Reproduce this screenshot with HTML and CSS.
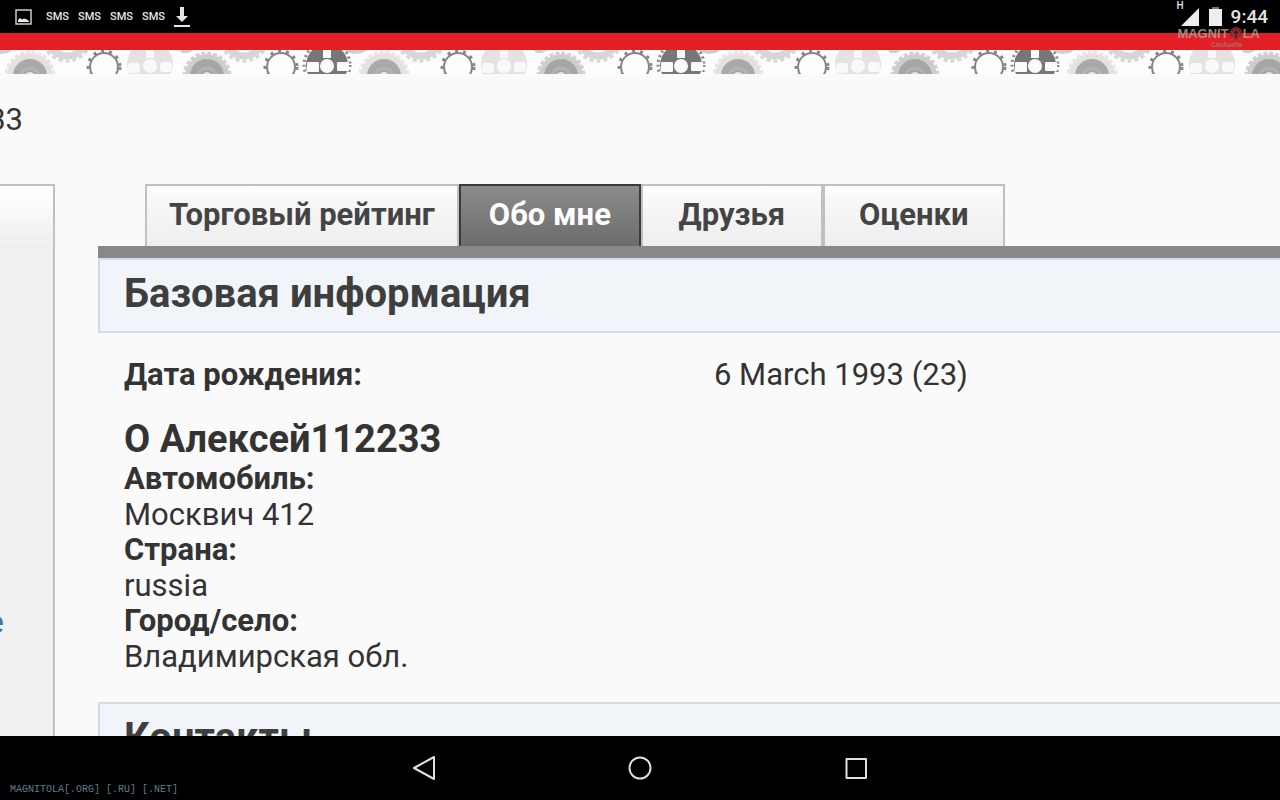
FILE: index.html
```html
<!DOCTYPE html>
<html lang="ru">

	<head>
		<meta charset="UTF-8">
		<title>Алексей112233</title>
		<link rel="stylesheet" href="styles.css">
	</head>
	<body>
		<div class="status">
			<svg class="pic" width="18" height="16" viewBox="0 0 18 16">
				<rect x="1" y="1" width="15" height="14" fill="none" stroke="#ccc" stroke-width="1.5" />
				<path d="M3 13V11L5 9L7 10.500L9 9.500L11 10L14 12V13Z" fill="#e8e8e8" />
			</svg>
			<span class="sms">SMS</span>
			<span class="sms">SMS</span>
			<span class="sms">SMS</span>
			<span class="sms">SMS</span>
			<svg class="load" width="16" height="20" viewBox="0 0 16 20">
				<path d="M6 0H10V9H14L8 15L2 9H6ZM0 18H16V20H0Z" fill="#e4e4e4" />
			</svg>
			<div class="right">
				<span class="net">H</span>
				<svg width="18" height="18" viewBox="0 0 18 18">
					<path d="M0 18L18 0V18Z" fill="#eee" />
				</svg>
				<svg class="bat" width="13" height="19" viewBox="0 0 13 19">
					<path d="M3 0H10V2H3Z" fill="#777" />
					<path d="M0 2H13V19H0Z" fill="#eee" />
				</svg>
				<span class="time">9:44</span>
			</div>
		</div>
		<div class="logo">
			<div class="name">
				MAGNIT<svg width="14" height="15" viewBox="0 0 15 15">
					<circle cx="7.500" cy="7.500" r="6" fill="#5b1a1c" stroke="#a8272b" stroke-width="2" />
					<path d="M3 15L5.500 10A3.500 3.500 0 1 1 9.500 10L12 15" fill="none" stroke="#9b4a48" stroke-width="1.500" />
				</svg>LA
			</div>
			<div class="sub">CarAudio</div>
		</div>
		<div class="page">
			<div class="red"></div>
			<svg class="gears" width="100%" height="24">
				<defs>
					<pattern id="gears" width="354" height="24" patternUnits="userSpaceOnUse">
						<rect width="354" height="24" fill="#fdfdfd" />
						<!-- колёса, уходящие за верхний край -->
						<g fill="none" stroke="#d6d6d6">
							<circle cx="67" cy="-13" r="19" stroke-width="7" />
							<circle cx="67" cy="-13" r="24" stroke-width="3" stroke-dasharray="4 3" />
							<circle cx="244" cy="-13" r="19" stroke-width="7" />
							<circle cx="244" cy="-13" r="24" stroke-width="3" stroke-dasharray="4 3" />
						</g>
						<path d="M0 0H12L8 3L0 4ZM180 0H194L188 3H182ZM354 0H346V2L354 4Z" fill="#cfcfcf" />
						<!-- большие колёса -->
						<circle cx="30" cy="26" r="23" fill="#e5e1df" />
						<circle cx="30" cy="26" r="24" fill="none" stroke="#ebe6e3" stroke-width="3" stroke-dasharray="4 2" />
						<circle cx="30" cy="26" r="17" fill="#a9a9a9" />
						<circle cx="30" cy="27" r="9" fill="none" stroke="#b4b4b4" stroke-width="3" />
						<circle cx="30" cy="27" r="5" fill="#e6e6e6" />
						<circle cx="207" cy="26" r="22" fill="#cdcdcd" />
						<circle cx="207" cy="26" r="23" fill="none" stroke="#d0d0d0" stroke-width="3" stroke-dasharray="4 2" />
						<circle cx="207" cy="26" r="17" fill="#a6a6a6" />
						<circle cx="207" cy="27" r="9" fill="none" stroke="#b2b2b2" stroke-width="3" />
						<circle cx="207" cy="27" r="5" fill="#e0e0e0" />
						<!-- маленькие шестерёнки -->
						<g fill="#fdfdfd" stroke="#868686">
							<circle cx="104" cy="17" r="14" stroke-width="2" />
							<circle cx="104" cy="17" r="16" fill="none" stroke-width="3" stroke-dasharray="3 5" />
							<circle cx="281" cy="17" r="14" stroke-width="2" />
							<circle cx="281" cy="17" r="16" fill="none" stroke-width="3" stroke-dasharray="3 5" />
						</g>
						<!-- колесо с окнами, светлое и тёмное -->
						<circle cx="150" cy="14" r="23" fill="#e4e3e2" />
						<g fill="#f9f9f9">
							<path d="M146 0H154V8H146Z" />
							<rect x="128" y="13" width="12" height="10" rx="3" />
							<circle cx="150" cy="16" r="7" />
							<rect x="160" y="12" width="12" height="10" rx="3" />
						</g>
						<circle cx="327" cy="15" r="21" fill="#777" />
						<circle cx="327" cy="15" r="23" fill="none" stroke="#888" stroke-width="3" stroke-dasharray="2 3" />
						<g fill="#fbfbfb">
							<path d="M323 0H331V8H323Z" />
							<rect x="307" y="12" width="12" height="10" rx="1" />
							<circle cx="327" cy="16" r="7" />
							<rect x="337" y="12" width="12" height="9" rx="1" />
						</g>
					</pattern>
				</defs>
				<rect width="100%" height="24" fill="url(#gears)" />
			</svg>
			<h1 class="user"><span>33</span></h1>
			<div class="cols">
				<div class="side">
					<div class="sideTop"></div>
					<a class="more" href="#">е</a>
				</div>
				<div class="con">
					<div class="tabs">
						<a href="#">Торговый рейтинг</a>
						<a href="#" class="activ">Обо мне</a>
						<a href="#">Друзья</a>
						<a href="#">Оценки</a>
					</div>
					<div class="line"></div>
					<h2>Базовая информация</h2>
					<div class="info">
						<dl class="birth">
							<dt>Дата рождения:</dt>
							<dd>6 March 1993 (23)</dd>
						</dl>
						<h3>О Алексей112233</h3>
						<dl>
							<dt>Автомобиль:</dt>
							<dd>Москвич 412</dd>
							<dt>Страна:</dt>
							<dd>russia</dd>
							<dt>Город/село:</dt>
							<dd>Владимирская обл.</dd>
						</dl>
					</div>
					<h2>Контакты</h2>
				</div>
			</div>
		</div>
		<div class="nav">
			<button aria-label="Назад">
				<svg width="26" height="28" viewBox="0 0 26 28">
					<path d="M3 14L23 3V25Z" />
				</svg>
			</button>
			<button aria-label="Домой">
				<svg width="26" height="28" viewBox="0 0 26 28">
					<circle cx="13" cy="14" r="10.500" />
				</svg>
			</button>
			<button aria-label="Недавние">
				<svg width="26" height="28" viewBox="0 0 26 28">
					<path d="M3.500 5H23V24H3.500Z" />
				</svg>
			</button>
			<span class="mark">MAGNITOLA[.ORG] [.RU] [.NET]</span>
		</div>
	</body>
</html>
```

FILE: styles.css
```css
body,
h1,
h2,
h3,
dl,
dt,
dd {
	margin: 0;
	padding: 0;
}

body {
	display: flex;
	flex-direction: column;
	height: 100vh;
	overflow: hidden;
	position: relative;
	background: #fafafa;
	color: #333;
	font: 31px/35px Roboto, sans-serif;
}

svg {
	display: block;
	flex: none;
}

a {
	text-decoration: none;
}

.status {
	display: flex;
	align-items: center;
	flex: none;
	gap: 10px;
	height: 33px;
	padding: 0 12px 0 15px;
	background: #000;
	color: #e4e4e4;
}

.pic {
	margin-right: 3px;
}

.sms {
	width: 22px;
	font: 500 11px/16px Roboto, sans-serif;
}

.status .right {
	display: flex;
	align-items: center;
	margin-left: auto;
}

.net {
	align-self: flex-start;
	margin-right: -3px;
	font: 500 10px/12px Roboto, sans-serif;
}

.bat {
	margin: 0 9px 0 10px;
}

.time {
	font: 500 19px/33px Roboto, sans-serif;
}

/* логотип поверх шапки */
.logo {
	position: absolute;
	top: 26px;
	right: 20px;
	color: #b5a196;
	opacity: .8;
	text-align: center;
}

.name {
	display: flex;
	align-items: center;
	font: bold 13px/15px "Liberation Sans Narrow", "Liberation Sans", sans-serif;
}

.sub {
	padding-left: 16px;
	color: #a08080;
	font: bold 7px/8px "Liberation Sans", sans-serif;
}

.page {
	flex: 1;
	min-height: 0;
	overflow: hidden;
}

.red {
	height: 17px;
	background: #e41e25;
}

.user {
	display: flex;
	justify-content: flex-end;
	width: 23px;
	padding: 28px 0 47px;
	font-size: 31px;
	font-weight: normal;
}

.cols {
	display: flex;
	gap: 43px;
	min-height: 100%;
}

.side {
	display: flex;
	flex-direction: column;
	flex: none;
	width: 53px;
	border-top: 2px solid #c0c0c0;
	border-right: 2px solid #c0c0c0;
	background: #f0f0f0;
}

.sideTop {
	height: 55px;
	border-bottom: 1px solid #f6f6f6;
	background: linear-gradient(#fff, #fbfbfb 35%, #efefef);
}

.more {
	display: flex;
	justify-content: flex-end;
	width: 4px;
	margin-top: 363px;
	color: #417394;
}

.con {
	flex: 1;
	min-width: 0;
}

.tabs {
	display: flex;
	padding-left: 47px;
}

.tabs a {
	box-sizing: border-box;
	min-width: 182px;
	height: 62px;
	padding: 11px 22px;
	border: 2px solid #c0c0c0;
	border-bottom: 0;
	background: linear-gradient(#fff, #f9f9f9 15%, #eee);
	color: #444;
	font-weight: bold;
	text-align: center;
}

.tabs .activ {
	border-color: #383b3a;
	background: linear-gradient(#8b8b8b, #6c6c6c);
	color: #fff;
}

.line {
	height: 12px;
	background: #888;
}

h2 {
	padding: 12px 24px 15px;
	border: 2px solid #cddeea;
	border-right: 0;
	background: #f1f5f9;
	color: #3e3e3e;
	font-size: 40px;
	line-height: 44px;
}

.info {
	padding: 24px 0 28px 26px;
}

.birth {
	display: grid;
	grid-template-columns: 1fr 1fr;
	column-gap: 24px;
}

dt {
	line-height: 36px;
	font-weight: bold;
}

h3 {
	padding-top: 24px;
	font-size: 38px;
	line-height: 44px;
}

.nav {
	display: flex;
	align-items: center;
	justify-content: center;
	flex: none;
	gap: 190px;
	height: 64px;
	background: #000;
}

.nav button {
	padding: 0;
	border: 0;
	background: none;
	cursor: pointer;
}

.nav path,
.nav circle {
	fill: none;
	stroke: #e0e0e0;
	stroke-width: 2;
	stroke-linejoin: round;
}

.mark {
	position: absolute;
	left: 10px;
	bottom: 3px;
	color: #5b7f88;
	font: 10px/14px "Liberation Mono", monospace;
}
```
